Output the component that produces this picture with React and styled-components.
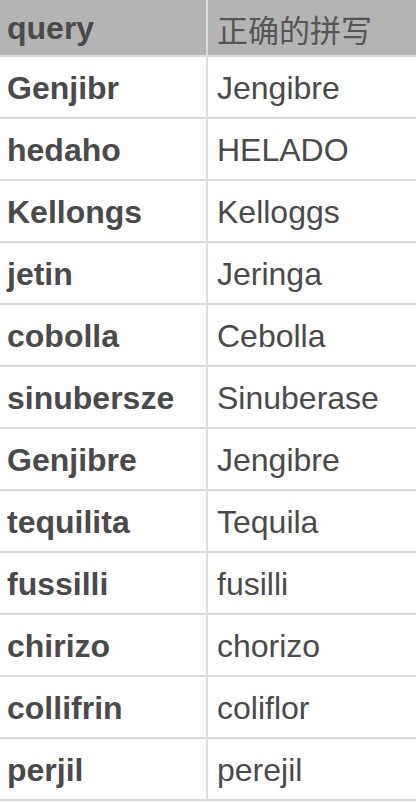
import React from "react";
import styled, { createGlobalStyle } from "styled-components";

const Global = createGlobalStyle`
  html, body { margin: 0; padding: 0; background: #ffffff; }
  body { font-family: "Liberation Sans", Arial, "Noto Sans CJK SC", sans-serif; }
`;

const Table = styled.div`
  display: grid;
  grid-template-columns: 206px 1fr;
  grid-template-rows: 55px;
  grid-auto-rows: 60px;
  column-gap: 2px;
  row-gap: 2px;
  background: #dcdcdc;
  padding-bottom: 2px;
  width: 416px;
`;

const Cell = styled.div`
  display: flex;
  align-items: center;
  padding-left: ${(p) => (p.$right ? "9px" : "7px")};
  padding-top: 2px;
  box-sizing: border-box;
  background: ${(p) => (p.$head ? "#b3b4b3" : "#ffffff")};
  color: ${(p) => (p.$head && p.$right ? "#555555" : "#4a4a4a")};
  font-family: "Liberation Sans", Arial, "Noto Sans CJK SC", sans-serif;
  font-size: ${(p) => (p.$head && p.$right ? "31px" : "32px")};
  font-weight: ${(p) => (p.$right ? 400 : 700)};
  white-space: nowrap;
  overflow: hidden;
`;

const rows = [
  ["Genjibr", "Jengibre"],
  ["hedaho", "HELADO"],
  ["Kellongs", "Kelloggs"],
  ["jetin", "Jeringa"],
  ["cobolla", "Cebolla"],
  ["sinubersze", "Sinuberase"],
  ["Genjibre", "Jengibre"],
  ["tequilita", "Tequila"],
  ["fussilli", "fusilli"],
  ["chirizo", "chorizo"],
  ["collifrin", "coliflor"],
  ["perjil", "perejil"],
];

export default function App() {
  return (
    <>
      <Global />
      <Table>
        <Cell $head>query</Cell>
        <Cell $head $right>正确的拼写</Cell>
        {rows.map(([q, a], i) => (
          <React.Fragment key={i}>
            <Cell>{q}</Cell>
            <Cell $right>{a}</Cell>
          </React.Fragment>
        ))}
      </Table>
    </>
  );
}
